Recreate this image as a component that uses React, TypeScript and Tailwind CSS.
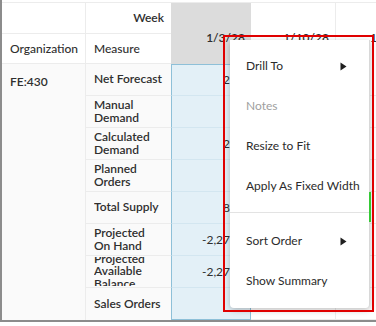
const font = { fontFamily: '"Lato", "Noto Sans", sans-serif' };

type Row = { name: string; value: string };

const rows: Row[] = [
    { name: "Net Forecast", value: "20" },
    { name: "Manual Demand", value: "" },
    { name: "Calculated Demand", value: "20" },
    { name: "Planned Orders", value: "" },
    { name: "Total Supply", value: "80" },
    { name: "Projected On Hand", value: "-2,273" },
    { name: "Projected Available Balance", value: "-2,273" },
    { name: "Sales Orders", value: "" },
];

const Arrow = () => (
    <svg width="7" height="9" viewBox="0 0 7 9">
        <path d="M0.5 0.5 L6.5 4.5 L0.5 8.5 Z" fill="#1f1f1f" />
    </svg>
);

const MenuItem = ({ label, disabled, submenu }: { label: string; disabled?: boolean; submenu?: boolean }) => (
    <div className={`h-10 flex items-center justify-between pl-4 pr-[22px] text-[12px] whitespace-nowrap ${disabled ? "text-[#a0a0a0]" : "text-[#2b2b2b]"}`}>
        <span>{label}</span>
        {submenu && <Arrow />}
    </div>
);

const App: React.FC = () => {
    return (
        <div className="w-[376px] h-[326px] bg-white relative overflow-hidden text-[#2f2f2f]" style={font}>
            {/* grid */}
            <div className="h-[322px] pt-[2px] border-l-2 border-b-2 border-[#8c8c8c]">
                <div className="grid grid-cols-[84px_85px_80px_85px_1fr] grid-rows-[31px_30px_repeat(8,32px)] border-t border-[#ececec] text-[12px]">
                    {/* header row 1 */}
                    <div className="border-r border-b border-[#ececec]" />
                    <div className="border-b border-[#ececec] flex items-center justify-end pr-[7px] font-semibold">Week</div>
                    <div className="row-span-2 bg-[#dcdcdc] flex items-center justify-end pr-[6px] pt-[9px] font-semibold">1/3/28</div>
                    <div className="row-span-2 border-r border-[#ececec] flex items-center justify-end pr-[6px] pt-[9px] font-semibold">1/10/28</div>
                    <div className="row-span-2 flex items-center pl-[34px] pt-[9px] font-semibold overflow-hidden whitespace-nowrap">1/17/28</div>

                    {/* header row 2 */}
                    <div className="border-r border-b border-[#ececec] flex items-center pl-[8px] font-medium">Organization</div>
                    <div className="border-b border-[#ececec] flex items-center pl-[8px] font-medium">Measure</div>

                    {/* body */}
                    <div className="row-span-8 col-start-1 row-start-3 border-r border-[#ececec] bg-[#fafafa] pl-[8px] pt-[9px] font-semibold">FE:430</div>
                    {rows.map((r, i) => (
                        <div key={r.name} className="contents">
                            <div
                                className={`col-start-2 bg-[#fafafa] px-[8px] py-[1px] font-semibold leading-[12.5px] ${i < rows.length - 1 ? "border-b border-[#ececec]" : ""}`}
                                style={{ gridRowStart: i + 3 }}
                            >
                                <div className="h-full overflow-hidden flex items-center">
                                    <span>{r.name}</span>
                                </div>
                            </div>
                            <div
                                className={`col-start-3 bg-[#e3f0f7] border-x border-[#8ec0d8] flex items-center justify-end pr-[13px] ${i === 0 ? "border-t" : ""} ${i === rows.length - 1 ? "border-b border-b-[#8ec0d8]" : "border-b border-b-[#d3e6f0]"}`}
                                style={{ gridRowStart: i + 3 }}
                            >
                                {r.value}
                            </div>
                            <div
                                className="col-start-4 border-r border-b border-[#ececec]"
                                style={{ gridRowStart: i + 3 }}
                            />
                            <div
                                className="col-start-5 border-b border-[#ececec]"
                                style={{ gridRowStart: i + 3 }}
                            />
                        </div>
                    ))}
                </div>
            </div>

            {/* context menu */}
            <div className="absolute left-[230px] top-[40px] w-[140px] h-[268px] bg-white rounded-b-[4px] border-r border-[#d8d8d8] shadow-[0_2px_6px_rgba(0,0,0,0.25)] pt-[6px]">
                <MenuItem label="Drill To" submenu />
                <MenuItem label="Notes" disabled />
                <MenuItem label="Resize to Fit" />
                <MenuItem label="Apply As Fixed Width" />
                <div className="mt-[6px] mb-[8px] border-t border-[#e3e3e3]" />
                <MenuItem label="Sort Order" submenu />
                <MenuItem label="Show Summary" />
            </div>

            {/* scroll marker */}
            <div className="absolute left-[369px] top-[192px] w-[2px] h-[30px] bg-[#35c935]" />

            {/* highlight outline */}
            <div className="absolute left-[223px] top-[35px] w-[151px] h-[277px] border-2 border-[#e00000]" />
        </div>
    );
};

export default App;
